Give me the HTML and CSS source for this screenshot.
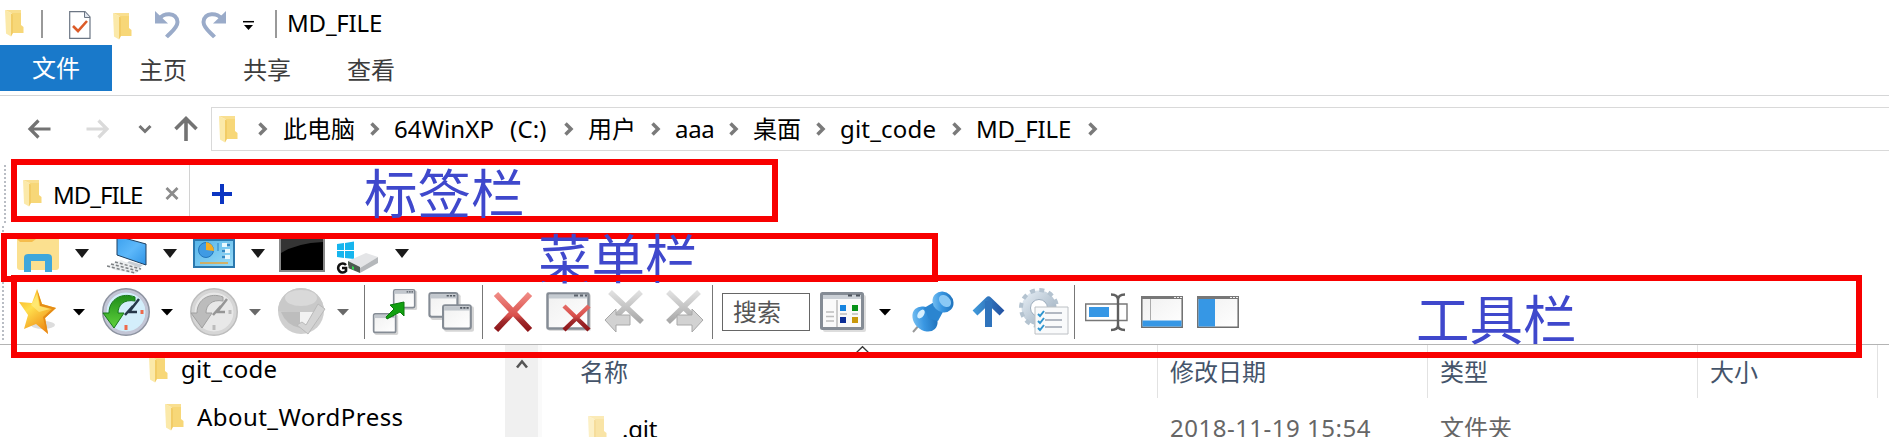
FILE: index.html
```html
<!DOCTYPE html>
<html lang="zh-CN">
<head>
<meta charset="utf-8">
<title>MD_FILE</title>
<link rel="stylesheet" href="styles.css">
</head>
<body>
<svg class="defs" width="0" height="0" aria-hidden="true">
  <defs>
    <linearGradient id="gStar" x1="0" y1="0" x2="0.6" y2="1"><stop offset="0" stop-color="#f7a51c"/><stop offset=".45" stop-color="#ffdf4d"/><stop offset="1" stop-color="#ee8a14"/></linearGradient>
    <linearGradient id="gRed" gradientUnits="userSpaceOnUse" x1="0" y1="2" x2="0" y2="38"><stop offset="0" stop-color="#f08a84"/><stop offset=".6" stop-color="#d9504c"/><stop offset=".75" stop-color="#a02a2c"/><stop offset="1" stop-color="#8e161a"/></linearGradient>
    <linearGradient id="gGray" x1="0" y1="0" x2="0" y2="1"><stop offset="0" stop-color="#e0e0e0"/><stop offset="1" stop-color="#a8a8a8"/></linearGradient>
    <linearGradient id="gBlue" x1="0" y1="0" x2="1" y2="1"><stop offset="0" stop-color="#8fd0f8"/><stop offset=".45" stop-color="#3a97e2"/><stop offset="1" stop-color="#1565ae"/></linearGradient>
    <linearGradient id="gUp" x1="0" y1="0" x2="1" y2="0"><stop offset="0" stop-color="#3f97d8"/><stop offset="1" stop-color="#2455a4"/></linearGradient>
    <linearGradient id="gGreen" x1="0" y1="0" x2="0" y2="1"><stop offset="0" stop-color="#1f8d1a"/><stop offset="1" stop-color="#5fd23c"/></linearGradient>
    <linearGradient id="gScreen" x1="0" y1="0" x2="1" y2="1"><stop offset="0" stop-color="#3ba0ee"/><stop offset=".5" stop-color="#5db8fa"/><stop offset="1" stop-color="#2e93e6"/></linearGradient>
    <linearGradient id="gPanel" x1="0" y1="0" x2="1" y2="1"><stop offset="0" stop-color="#55b4ea"/><stop offset="1" stop-color="#9adcf8"/></linearGradient>
    <linearGradient id="gPaper" x1="0" y1="0" x2="1" y2="1"><stop offset="0" stop-color="#f0f0f0"/><stop offset="1" stop-color="#ffffff"/></linearGradient>
    <linearGradient id="gGear" x1="0" y1="0" x2="1" y2="1"><stop offset="0" stop-color="#dfe8f0"/><stop offset="1" stop-color="#9fb0c0"/></linearGradient>
    <symbol id="folder" viewBox="0 0 19 27"><path d="M7 1H16V15L18.500 17V23H6Z" fill="#f7d778"/><path d="M0 0 6 3V26.500L1 23.500Z" fill="#fbe9a9"/><path d="M0 0H16V3L6 3Z" fill="#f9df90"/><path d="M6 3 8 5V23L6 26.500Z" fill="#f2cc66"/></symbol>
    <symbol id="chev" viewBox="0 0 10 14"><path d="M1.500 1.500 7 7 1.500 12.500" fill="none" stroke="#7a7a7a" stroke-width="3.500"/></symbol>
    <symbol id="tri" viewBox="0 0 14 9"><path d="M0 0H14L7 9Z"/></symbol>
    <symbol id="tri-s" viewBox="0 0 12 7"><path d="M0 0H12L6 6.500Z"/></symbol>
    <symbol id="undo" viewBox="0 0 26 28"><path d="M4 8.500C8 1 22 1 22.500 11 22.500 17 16 21 11.500 26" fill="none" stroke="#9aabc9" stroke-width="4"/><path d="M0 0V12.500H13Z" fill="#9aabc9"/></symbol>
    <symbol id="win-s" viewBox="0 0 30 26"><rect x="2" y="2" width="28" height="24" rx="2" fill="#d6d6d6"/><rect x="1" y="1" width="26" height="22" rx="2" fill="url(#gPaper)" stroke="#858c95" stroke-width="2"/><rect x="2" y="2" width="24" height="4" fill="#c2c7cd"/><path d="M17 3.500h2M20 3.500h2M23 3.500h2" stroke="#515861" stroke-width="1.500"/></symbol>
  </defs>
</svg>

<header class="title-bar">
  <svg class="i-folder" width="19" height="27"><use href="#folder"/></svg>
  <i class="bar"></i>
  <svg class="i-doc" width="22" height="28"><path d="M.7.7H16L21 6V27.300H.7Z" fill="#fff" stroke="#6c7684" stroke-width="1.200"/><path d="M15.500.7V6.500H21" fill="#dfe5ee" stroke="#6c7684"/><path d="M4 15 9 20 18 10" fill="none" stroke="#dc5b28" stroke-width="2.600"/></svg>
  <svg class="i-folder2" width="19" height="27"><use href="#folder"/></svg>
  <svg width="26" height="28"><use href="#undo"/></svg>
  <svg class="flip" width="26" height="28"><use href="#undo"/></svg>
  <svg width="11" height="9"><path d="M0 .7H11" stroke="#000" stroke-width="1.500"/><path d="M1 4H10L5.500 9Z"/></svg>
  <i class="bar"></i>
  <span class="latin title">MD_FILE</span>
</header>

<nav class="ribbon">
  <span class="file">文件</span><span>主页</span><span>共享</span><span>查看</span>
</nav>

<div class="address-row">
  <div class="nav-buttons">
    <svg width="23" height="20"><path d="M10.500 1.500 2 10 10.500 18.500M2 10H22.500" fill="none" stroke="#737373" stroke-width="3.200"/></svg>
    <svg width="23" height="20"><path d="M12.500 1.500 21 10 12.500 18.500M21 10H.5" fill="none" stroke="#dadada" stroke-width="3.200"/></svg>
    <svg width="14" height="10"><path d="M1.500 2 7 7.500 12.500 2" fill="none" stroke="#757575" stroke-width="3"/></svg>
    <svg width="24" height="26"><path d="M1.500 13 12 2.500 22.500 13M12 2.500V25" fill="none" stroke="#737373" stroke-width="3.600"/></svg>
  </div>
  <div class="crumbs">
    <svg width="19" height="27"><use href="#folder"/></svg>
    <svg width="10" height="14"><use href="#chev"/></svg><span>此电脑</span>
    <svg width="10" height="14"><use href="#chev"/></svg><span class="latin drive">64WinXP<b>(C:)</b></span>
    <svg width="10" height="14"><use href="#chev"/></svg><span>用户</span>
    <svg width="10" height="14"><use href="#chev"/></svg><span class="latin aaa">aaa</span>
    <svg width="10" height="14"><use href="#chev"/></svg><span>桌面</span>
    <svg width="10" height="14"><use href="#chev"/></svg><span class="latin code">git_code</span>
    <svg width="10" height="14"><use href="#chev"/></svg><span class="latin">MD_FILE</span>
    <svg width="10" height="14"><use href="#chev"/></svg>
  </div>
</div>

<div class="tab-row">
  <i class="grip"></i>
  <div class="tab">
    <svg width="19" height="27"><use href="#folder"/></svg>
    <span class="latin tab-name">MD_FILE</span>
    <svg width="14" height="13"><path d="M1.500 1 12.500 12M12.500 1 1.500 12" stroke="#8b8b8b" stroke-width="2.800"/></svg>
  </div>
  <svg class="plus" width="20" height="20"><path d="M10 0V20M0 10H20" stroke="#0b35c2" stroke-width="4"/></svg>
</div>

<div class="menu-row">
  <i class="grip"></i>
  <svg width="42" height="36"><path d="M0 0H42V28Q42 31 39 31H3Q0 31 0 28Z" fill="#fbe08f"/><path d="M0 0H19L15 3H3Z" fill="#f5bd4d"/><path d="M7 33V19Q7 15 11 15H31Q35 15 35 19V33H28V22H14V33Z" fill="#3ea7dc"/></svg>
  <svg width="14" height="9" fill="#1a1a1a"><use href="#tri"/></svg>
  <svg width="42" height="36"><path d="M10-3 39 5V26L10 16Z" fill="url(#gScreen)" stroke="#1e3f60"/><path d="M22 22 36 26 31 30 18 26Z" fill="#c9ced4"/><path d="M0 27 14 21 35 30 28 35 8 31Z" fill="#eceeef"/><path d="M0 27 28 34M4 25 31 32M8 23 34 30" stroke="#7d8083" stroke-width="1.500" stroke-dasharray="3 2"/></svg>
  <svg width="14" height="9" fill="#1a1a1a"><use href="#tri"/></svg>
  <svg width="42" height="36"><rect x="1" y="1" width="40" height="27" fill="url(#gPanel)" stroke="#2b78ae" stroke-width="2"/><circle cx="13" cy="11" r="7.500" fill="#3f9be4" stroke="#2377bd"/><path d="M13 11V3A9 9 0 0 1 21 12Z" fill="#f5ad25"/><path d="M25 4V12" stroke="#2b83c4"/><path d="M29 6h8M29 12h8M29 18h8" stroke="#e9f8fe" stroke-width="4"/><path d="M34 6h3M29 12h3M29 18h3" stroke="#3288c4" stroke-width="3"/><path d="M7 24H35" stroke="#e9a43a" stroke-width="1.500"/></svg>
  <svg width="14" height="9" fill="#1a1a1a"><use href="#tri"/></svg>
  <svg width="46" height="36"><rect x="1" y="-3" width="44" height="35" fill="#000" stroke="#888" stroke-width="2"/><path d="M2 0H44V3Q18 4 2 14Z" fill="#343434"/></svg>
  <svg width="45" height="36"><path d="M2 5 9 4V11H2ZM10 4 19 2.500V11H10ZM2 12H9V19L2 18ZM10 12H19V20L10 19Z" fill="#16b5ee"/><path d="M13 22 31 14 43 18 25 29Z" fill="#e4e5e7"/><path d="M25 29 43 18V24L25 34Z" fill="#b5b8bb"/><path d="M13 22 25 28V34L13 29Z" fill="#4d5a4f"/><path d="M17 27 19 28V31L17 30Z" fill="#31d64c"/><path d="M11 26A4.500 4.500 0 1 0 11 32V29H7" fill="none" stroke="#fff" stroke-width="5"/><path d="M11 26A4.500 4.500 0 1 0 11 32V29H7" fill="none" stroke="#111" stroke-width="2.600"/></svg>
  <svg width="14" height="9" fill="#1a1a1a"><use href="#tri"/></svg>
</div>

<div class="tool-row">
  <i class="grip"></i>
  <svg width="40" height="48"><ellipse cx="24" cy="37" rx="12" ry="4" fill="#ddd"/><path d="M18 1 23 16 37 20 26 30 29 46 17 36 5 41 9 27 0 14 13 15Z" fill="url(#gStar)"/><path d="M18 1 23 16 37 20 26 30 29 46 27 43 24 29 33 21 21 18Z" fill="#e58c17"/><path d="M18 6 20 18 31 21 20 24 12 17Z" fill="#fff08a" opacity=".6"/></svg>
  <svg width="12" height="7"><use href="#tri-s"/></svg>
  <svg width="48" height="48"><circle cx="24" cy="24" r="22" fill="#d3eefb" stroke="#8d93a0" stroke-width="4"/><circle cx="24" cy="24" r="21" fill="none" stroke="#c3c6d6" stroke-width="3"/><path d="M37 11 27 24H35M31 18 23 27" fill="none" stroke="#26384a" stroke-width="2.500"/><path d="M40 22V26M24 37V42" stroke="#ee694b" stroke-width="3"/><path d="M33 9C20 4 7 11 7 25H1L12 40 22 25H16C16 17 22 11 33 13Z" fill="url(#gGreen)" stroke="#16781a"/></svg>
  <svg width="12" height="7"><use href="#tri-s"/></svg>
  <svg width="48" height="48"><circle cx="24" cy="24" r="22" fill="#e8e8e8" stroke="#bdbdbd" stroke-width="4"/><circle cx="24" cy="24" r="21" fill="none" stroke="#d6d6d6" stroke-width="3"/><path d="M37 11 27 24H35M31 18 23 27" fill="none" stroke="#969696" stroke-width="2.500"/><path d="M40 22V26M24 37V42" stroke="#bbb" stroke-width="3"/><path d="M33 9C20 4 7 11 7 25H1L12 40 22 25H16C16 17 22 11 33 13Z" fill="#bcbcbc" stroke="#a0a0a0"/></svg>
  <svg width="12" height="7" fill="#696969"><use href="#tri-s"/></svg>
  <svg width="48" height="48"><circle cx="23" cy="23" r="23" fill="#cfcfcf"/><path d="M0 23A23 23 0 0 1 46 23Q23 26 0 23Z" fill="#c9c9c9"/><ellipse cx="23" cy="10" rx="16" ry="8" fill="#d9d9d9"/><path d="M3 24H22V40Q8 37 3 24Z" fill="#bdbdbd"/><path d="M22 24H38L27 41 22 37Z" fill="#f2f2f2"/><path d="M40 16 47 21 30 46 19 37 24 34 28 37Z" fill="#d4d4d4" stroke="#bababa"/></svg>
  <svg width="12" height="7" fill="#696969"><use href="#tri-s"/></svg>
  <i class="rule"></i>
  <svg width="46" height="48"><use href="#win-s" x="20" y="1" width="26" height="21"/><use href="#win-s" x="0" y="25" width="27" height="22"/><path d="M14 29 22 21 18 17 32 14 32 28 28 24 15 31Z" fill="#12a010" stroke="#08780a"/></svg>
  <svg width="46" height="40"><use href="#win-s" width="33" height="28"/><use href="#win-s" x="14" y="12" width="32" height="28"/></svg>
  <i class="rule"></i>
  <svg width="40" height="40"><path d="M3 2 37 38M37 2 3 38" stroke="url(#gRed)" stroke-width="6"/></svg>
  <svg width="46" height="40"><rect x="2" y="2" width="43" height="37" rx="2" fill="#ddd"/><rect x="1.500" y="1.500" width="41" height="35" rx="1" fill="url(#gPaper)" stroke="#858c95" stroke-width="2.500"/><path d="M3 4.500H41" stroke="#c5cbd1" stroke-width="4"/><path d="M28 3.500H32M34 3.500H37M39 3.500H41" stroke="#5c636c" stroke-width="2"/><path d="M18 14 43 38M43 14 18 38" stroke="url(#gRed)" stroke-width="4.500"/></svg>
  <svg width="42" height="44"><path d="M6 2 38 32M37 2 6 32" stroke="url(#gGray)" stroke-width="5.500"/><path d="M1 30 12 19V25H26V35H12V42Z" fill="#d2d2d2" stroke="#a8a8a8"/></svg>
  <svg width="42" height="44"><path d="M3 2 34 32M34 2 3 32" stroke="url(#gGray)" stroke-width="5.500"/><path d="M38 30 27 19V25H12V35H27V42Z" fill="#d2d2d2" stroke="#a8a8a8"/></svg>
  <i class="rule"></i>
  <div class="search">搜索</div>
  <svg width="46" height="40"><rect x="3" y="3" width="43" height="37" rx="2" fill="#ddd"/><rect x="1.500" y="1.500" width="41" height="35" rx="1" fill="#fafafa" stroke="#858c95" stroke-width="3"/><path d="M3 5H41" stroke="#cbd0d6" stroke-width="4"/><path d="M28 3.500H32M36 3.500H40" stroke="#4d535c" stroke-width="2"/><path d="M17 8V35" stroke="#ccc" stroke-width="2"/><path d="M6 20h8M6 24.500h8M6 29h8M20 22h7M32 22h6" stroke="#bdbdbd" stroke-width="1.500"/><path d="M20 13h6v6h-6z" fill="#1583df"/><path d="M32 13h6v6h-6z" fill="#069218"/><path d="M20 25h6v6h-6z" fill="#0b2d96"/><path d="M32 25h6v6h-6z" fill="#c9980b"/></svg>
  <svg width="12" height="7"><use href="#tri-s"/></svg>
  <svg width="44" height="44"><path d="M1 42 9 33" stroke="#999" stroke-width="2"/><ellipse cx="13" cy="29" rx="11" ry="14" transform="rotate(-45 13 29)" fill="url(#gBlue)"/><path d="M12 18 24 11 32 20 26 31 17 29Z" fill="#2b85d0"/><ellipse cx="31" cy="12" rx="10" ry="11" transform="rotate(-45 31 12)" fill="url(#gBlue)"/><ellipse cx="33" cy="11" rx="5" ry="7" transform="rotate(-45 33 11)" fill="#8bc9f5"/><ellipse cx="9" cy="24" rx="3" ry="5" transform="rotate(35 9 24)" fill="#d5efff"/></svg>
  <svg width="34" height="34"><path d="M3 18 16.500 5 30 18" fill="none" stroke="url(#gUp)" stroke-width="7" stroke-linejoin="round"/><path d="M13 6H20V32H13Z" fill="#2f73bc"/></svg>
  <svg width="50" height="50"><circle cx="19" cy="21" r="13" fill="none" stroke="url(#gGear)" stroke-width="9"/><circle cx="19" cy="21" r="18" fill="none" stroke="#b4c3d0" stroke-width="4" stroke-dasharray="5 4.400"/><circle cx="19" cy="21" r="8.500" fill="#fff" stroke="#9babbb"/><path d="M15 20H48V47H15Z" fill="#f9fafb" stroke="#bcc0c4"/><path d="M25 26H42M25 33H42M25 40H42" stroke="#9aa3b0" stroke-width="1.500"/><path d="M18 27 20 29 24 24M18 34 20 36 24 31M18 41 20 43 24 38" fill="none" stroke="#2f95cf" stroke-width="2"/></svg>
  <i class="rule"></i>
  <svg width="43" height="39"><path d="M.7 11H42V27.500H.7Z" fill="#fff" stroke="#777" stroke-width="1.400"/><path d="M4 14H24V24H4Z" fill="#3697e5"/><path d="M26 1.500Q33 1.500 33 7V32Q33 37 26 37M40 1.500Q33 1.500 33 7M33 32Q33 37 40 37" fill="none" stroke="#5f5f5f" stroke-width="2.400"/></svg>
  <svg width="42" height="32"><path d="M.8.8H41.200V31.200H.8Z" fill="url(#gPaper)" stroke="#6d6d6d" stroke-width="1.500"/><path d="M0 1.500H42" stroke="#777" stroke-width="3"/><path d="M33 1.500h2M36 1.500h2M39 1.500h2" stroke="#eee"/><path d="M9.500 3V24" stroke="#aaa"/><path d="M1.500 24.500H40.500V30.500H1.500Z" fill="#3697e5"/></svg>
  <svg width="42" height="32"><path d="M.8.8H41.200V31.200H.8Z" fill="url(#gPaper)" stroke="#6d6d6d" stroke-width="1.500"/><path d="M0 1.500H42" stroke="#777" stroke-width="3"/><path d="M33 1.500h2M36 1.500h2M39 1.500h2" stroke="#eee"/><path d="M1.500 3H18V30.500H1.500Z" fill="#3697e5"/></svg>
</div>

<main class="content">
  <aside class="tree">
    <div class="node"><svg width="19" height="27"><use href="#folder"/></svg><span class="latin code">git_code</span></div>
    <div class="node child"><svg width="19" height="27"><use href="#folder"/></svg><span class="latin about">About_WordPress</span></div>
  </aside>
  <div class="scroll"><svg width="12" height="10"><path d="M1 8.500 6 2.500 11 8.500" fill="none" stroke="#555" stroke-width="2.600"/></svg></div>
  <section class="list">
    <div class="columns"><span>名称</span><span>修改日期</span><span>类型</span><span>大小</span></div>
    <div class="file-row">
      <span class="name"><svg width="19" height="27" opacity=".65"><use href="#folder"/></svg><b class="latin">.git</b></span>
      <span class="latin date">2018-11-19 15:54</span><span>文件夹</span>
    </div>
    <svg class="collapse" width="13" height="7"><path d="M.5 6.500 6.500 .7 12.500 6.500" fill="none" stroke="#333" stroke-width="1.200"/></svg>
  </section>
</main>

<div class="mark mark-tabs"><b>标签栏</b></div>
<div class="mark mark-menu"><b>菜单栏</b></div>
<div class="mark mark-tools"><b>工具栏</b></div>
</body>
</html>
```
FILE: styles.css
```css
* { box-sizing: border-box; }
body {
  margin: 0;
  width: 1889px;
  height: 437px;
  overflow: hidden;
  position: relative;
  background: #fff;
  color: #000;
  font: 24px/32px "Noto Sans", "Noto Sans CJK SC", sans-serif;
}
svg { display: block; flex: none; overflow: visible; }
.menu-row svg { overflow: hidden; }
b { font-weight: 400; }
.defs { position: absolute; }
.latin { letter-spacing: -0.2px; white-space: nowrap; }
.code { letter-spacing: 0.2px; }
.bar { width: 2px; height: 28px; background: #999; }

.title-bar {
  height: 45px;
  padding: 0 0 4px 5px;
  display: grid;
  grid-template-columns: 36px 28px 44px 42px 45px 43px 32px 12px auto;
  align-items: center;
}
.title-bar .i-folder { margin-top: 5px; }
.title-bar .bar { margin-top: 6px; }
.title-bar .i-doc { margin-top: 8px; }
.title-bar .i-folder2 { margin-top: 11px; }
.title-bar svg { margin-top: 9px; }
.title { margin-top: 4px; }
.flip { transform: scaleX(-1); }

.ribbon {
  height: 51px;
  border-bottom: 1px solid #d5d6d7;
  display: grid;
  grid-template-columns: 139px 104px 104px auto;
  color: #3c3c3c;
  line-height: 50px;
}
.ribbon .file { width: 112px; height: 46px; padding-left: 32px; line-height: 46px; background: #1979ca; color: #fff; }

.address-row { height: 63px; display: flex; padding-top: 11px; }
.nav-buttons { width: 211px; height: 44px; padding-left: 28px; display: grid; grid-template-columns: 58px 52px 36px auto; align-items: center; }
.crumbs {
  flex: 1;
  height: 44px;
  border: 1px solid #d9d9d9;
  border-right: 0;
  padding-left: 7px;
  display: grid;
  grid-template-columns: 39px 25px 87px 24px 170px 24px 63px 24px 54px 24px 63px 24px 112px 24px 112px auto;
  align-items: center;
}
.drive { letter-spacing: 0.1px; }
.drive b { margin-left: 16px; }
.aaa { letter-spacing: -0.3px; }

.grip { width: 2px; background: repeating-linear-gradient(#b9bdc4 0 2px, transparent 2px 4px); }
.tab-row { height: 66px; display: flex; align-items: center; }
.tab-row .grip { height: 58px; margin: 3px 17px 0 4px; }
.tab { width: 167px; height: 57px; border-right: 1px solid #d2d2d2; margin-right: 22px; padding-top: 3px; display: grid; grid-template-columns: 30px 112px auto; align-items: center; }
.tab-name { letter-spacing: -1px; padding-top: 2px; }
.plus { margin-top: 3px; }

.menu-row {
  height: 57px;
  padding: 14px 0 0 2px;
  display: grid;
  grid-template-columns: 15px 58px 32px 56px 30px 58px 28px 56px 60px auto;
}
.menu-row .grip { height: 48px; margin-top: -13px; }
.menu-row svg[height="9"] { margin-top: 10px; }

.tool-row {
  height: 63px;
  padding: 0 0 2px 2px;
  border-bottom: 1px solid #b4b4b4;
  display: grid;
  grid-template-columns: 17px 54px 29px 59px 29px 59px 29px 59px 27px 8px 56px 54px 11px 53px 58px 61px 47px 10px 98px 59px 33px 60px 48px 54px 11px 56px 56px auto;
  align-items: center;
}
.tool-row .grip { height: 60px; }
.rule { width: 1px; height: 54px; background: #777; }
.search { width: 88px; height: 38px; border: 1px solid #666; padding-left: 10px; line-height: 35px; color: #555; }

.content { height: 92px; display: flex; }
.tree { width: 505px; }
.node { display: flex; gap: 13px; align-items: center; height: 48px; padding-left: 149px; }
.child { padding-left: 165px; }
.about { letter-spacing: 0.45px; }
.scroll { width: 33px; background: #f0f0f0; padding: 14px 0 0 11px; }
.list { flex: 1; position: relative; border-left: 4px solid #fafafa; }
.columns, .file-row { display: grid; grid-template-columns: 616px 270px 270px 180px; }
.columns { height: 51px; color: #44546a; line-height: 53px; }
.columns span { border-right: 1px solid #e2e2e2; padding-left: 12px; }
.columns span:first-child { padding-left: 38px; }
.file-row { height: 41px; padding-top: 14px; color: #666; line-height: 36px; }
.file-row > span { padding-left: 12px; }
.date { letter-spacing: 0.5px; }
.file-row .name { display: flex; gap: 15px; padding: 6px 0 0 46px; color: #000; line-height: 28px; }
.file-row .name b { margin-top: -1px; }
.collapse { position: absolute; left: 314px; top: 1px; }

.mark { position: absolute; border: 6px solid #f80000; }
.mark b { position: absolute; font: 400 53.500px/60px "Noto Sans CJK SC", sans-serif; color: #3f48cc; white-space: nowrap; }
.mark-tabs { left: 11px; top: 159px; width: 767px; height: 63px; }
.mark-tabs b { left: 347px; top: -4px; }
.mark-menu { left: 1px; top: 233px; width: 937px; height: 49px; }
.mark-menu b { left: 531px; top: -13px; }
.mark-tools { left: 11px; top: 275px; width: 1851px; height: 83px; }
.mark-tools b { left: 1399px; top: 6px; }
```
